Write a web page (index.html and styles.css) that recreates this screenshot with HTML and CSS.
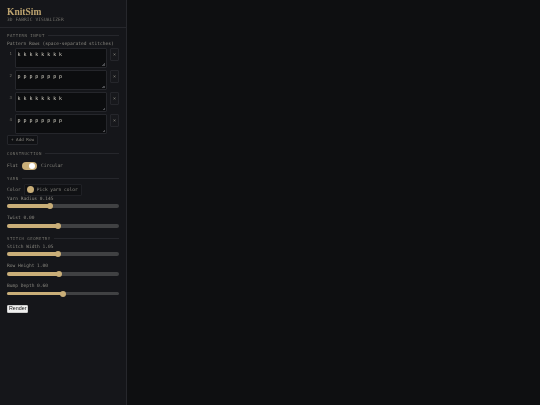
FILE: index.html
```html
<!DOCTYPE html>
<html lang="en">
<head>
    <meta charset="UTF-8">
    <meta name="viewport" content="width=device-width, initial-scale=1.0">
    <title>KnitSim</title>
    <link rel="stylesheet" href="styles.css">
</head>
<body>
    <div class="app">
        <aside class="sidebar">
            <header class="brand">
                <h1>KnitSim</h1>
                <p>3D FABRIC VISUALIZER</p>
            </header>

            <div class="panel">
                <div class="section-title first">PATTERN INPUT</div>
                <div class="field-label">Pattern Rows (space-separated stitches)</div>
                <div class="rows">
                    <div class="row">
                        <span class="row-num">1</span>
                        <textarea class="row-input" spellcheck="false">k k k k k k k k</textarea>
                        <button class="row-del">×</button>
                    </div>
                    <div class="row">
                        <span class="row-num">2</span>
                        <textarea class="row-input" spellcheck="false">p p p p p p p p</textarea>
                        <button class="row-del">×</button>
                    </div>
                    <div class="row">
                        <span class="row-num">3</span>
                        <textarea class="row-input" spellcheck="false">k k k k k k k k</textarea>
                        <button class="row-del">×</button>
                    </div>
                    <div class="row">
                        <span class="row-num">4</span>
                        <textarea class="row-input" spellcheck="false">p p p p p p p p</textarea>
                        <button class="row-del">×</button>
                    </div>
                </div>
                <button class="add-row">+ Add Row</button>

                <div class="section-title">CONSTRUCTION</div>
                <div class="toggle-row">
                    <span>Flat</span>
                    <span class="toggle"><span class="knob"></span></span>
                    <span>Circular</span>
                </div>

                <div class="section-title">YARN</div>
                <div class="color-row">
                    <span>Color</span>
                    <span class="color-btn"><span class="swatch"></span>Pick yarn color</span>
                </div>
                <div class="slider">
                    <div class="field-label">Yarn Radius 0.145</div>
                    <div class="track"><div class="fill" style="width: 38.4%"></div><div class="thumb" style="left: 38.4%"></div></div>
                </div>
                <div class="slider">
                    <div class="field-label">Twist 0.00</div>
                    <div class="track"><div class="fill" style="width: 45.5%"></div><div class="thumb" style="left: 45.5%"></div></div>
                </div>

                <div class="section-title">STITCH GEOMETRY</div>
                <div class="slider">
                    <div class="field-label">Stitch Width 1.05</div>
                    <div class="track"><div class="fill" style="width: 45.5%"></div><div class="thumb" style="left: 45.5%"></div></div>
                </div>
                <div class="slider">
                    <div class="field-label">Row Height 1.00</div>
                    <div class="track"><div class="fill" style="width: 46.4%"></div><div class="thumb" style="left: 46.4%"></div></div>
                </div>
                <div class="slider">
                    <div class="field-label">Bump Depth 0.60</div>
                    <div class="track"><div class="fill" style="width: 50.4%"></div><div class="thumb" style="left: 50.4%"></div></div>
                </div>

                <button class="render">Render</button>
            </div>
        </aside>
        <main class="viewport"></main>
    </div>
</body>
</html>
```

FILE: styles.css
```css
* {
    box-sizing: border-box;
}

html, body {
    margin: 0;
    padding: 0;
    height: 100%;
    overflow: hidden;
}

body {
    background: #0e0f11;
    font-family: "DejaVu Sans Mono", "Liberation Mono", monospace;
    font-size: 4.55px;
    color: #8a8880;
}

.app {
    display: flex;
    height: 405px;
}

.sidebar {
    width: 127px;
    flex-shrink: 0;
    background: #15161a;
    border-right: 1px solid #26272c;
    filter: blur(0.3px);
}

.viewport {
    flex: 1;
    background: #0e0f11;
}

.brand {
    padding: 7px 7px 0;
    height: 28px;
    border-bottom: 1px solid #26272c;
}

.brand h1 {
    margin: 0;
    font-family: "Liberation Serif", serif;
    font-size: 9.5px;
    line-height: 10px;
    font-weight: bold;
    color: #bfa570;
}

.brand p {
    margin: 0;
    font-size: 4.5px;
    line-height: 6px;
    letter-spacing: 0.13px;
    color: #74736c;
}

.panel {
    padding: 0 7px;
}

.section-title {
    display: flex;
    align-items: center;
    gap: 3px;
    height: 6px;
    margin: 5.5px 0 2.5px;
    font-size: 4px;
    letter-spacing: 0.5px;
    color: #74736c;
    white-space: nowrap;
}

.section-title.first {
    margin-top: 4px;
}

.slider + .section-title {
    margin-top: 3px;
}

.section-title::after {
    content: "";
    flex: 1;
    height: 1px;
    background: #26272c;
}

.field-label {
    height: 6px;
    line-height: 6px;
    color: #8a8880;
    white-space: nowrap;
}

.rows {
    display: flex;
    flex-direction: column;
    gap: 2px;
    margin-top: 1px;
}

.row {
    display: flex;
    height: 20px;
}

.row-num {
    width: 5px;
    margin-right: 2.5px;
    padding-top: 3.5px;
    font-size: 4px;
    line-height: 6px;
    color: #74736c;
    text-align: right;
    flex-shrink: 0;
}

.row-input {
    width: 93px;
    height: 20px;
    margin: 0 3px 0 0;
    padding: 2.5px 2px;
    background: #0c0d0f linear-gradient(135deg, transparent 50%, #4a4b4f 50%) no-repeat right 1px bottom 1px / 3px 3px;
    border: 1px solid #25262b;
    border-radius: 1px;
    color: #d8d4c8;
    font-family: inherit;
    font-size: 4.95px;
    line-height: 6px;
    outline: none;
    resize: none;
}

.row-del {
    width: 9px;
    height: 13px;
    padding: 0;
    background: #17181c;
    border: 1px solid #25262b;
    border-radius: 1px;
    color: #8a8880;
    font-family: inherit;
    font-size: 5px;
    line-height: 1;
}

.add-row {
    display: block;
    width: 31px;
    height: 9.5px;
    margin-top: 1.5px;
    padding: 0;
    background: #101114;
    border: 1px solid #25262b;
    border-radius: 1px;
    color: #8a8880;
    font-family: inherit;
    font-size: 4.25px;
}

.toggle-row, .color-row {
    display: flex;
    align-items: center;
    color: #8a8880;
}

.toggle-row {
    gap: 4px;
    height: 8.5px;
    margin-top: 5.5px;
}

.toggle {
    position: relative;
    width: 15px;
    height: 8.5px;
    background: #c9ae78;
    border-radius: 4.25px;
}

.knob {
    position: absolute;
    top: 1.25px;
    right: 2px;
    width: 6px;
    height: 6px;
    background: #fff;
    border-radius: 50%;
}

.color-row {
    gap: 3px;
    height: 11.5px;
}

.color-btn {
    display: flex;
    align-items: center;
    gap: 3px;
    width: 58px;
    height: 11.5px;
    padding: 0 2px;
    background: #101114;
    border: 1px solid #1f2025;
    border-radius: 1px;
    white-space: nowrap;
}

.swatch {
    width: 7px;
    height: 7px;
    background: #c9ae78;
    border-radius: 50%;
    flex-shrink: 0;
}

.slider {
    margin-bottom: 7.5px;
}

.track {
    position: relative;
    height: 3.5px;
    margin-top: 2.75px;
    background: #404143;
    border-radius: 2px;
}

.fill {
    height: 100%;
    background: #c9ae78;
    border-radius: 2px;
}

.thumb {
    position: absolute;
    top: -1.25px;
    width: 6px;
    height: 6px;
    margin-left: -3px;
    background: #c9ae78;
    border-radius: 50%;
}

.render {
    display: block;
    height: 8px;
    margin-top: 9.5px;
    padding: 0 1px;
    background: #efefef;
    border: 1px solid #cfcfcf;
    border-radius: 1px;
    color: #111;
    font-family: "Liberation Sans", Arial, sans-serif;
    font-size: 5.33px;
    line-height: 1;
}
```
